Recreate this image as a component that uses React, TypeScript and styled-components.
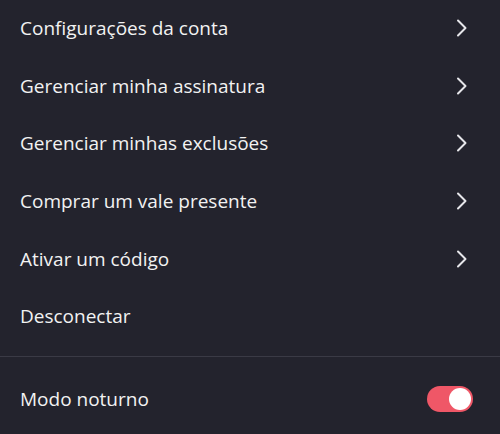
import React, { useState } from "react";
import styled, { createGlobalStyle } from "styled-components";

const Global = createGlobalStyle`
  html, body { margin: 0; padding: 0; background: #23232d; }
  body { font-family: "Open Sans", "Noto Sans", sans-serif; }
`;

const Panel = styled.div`
  width: 500px;
  height: 434px;
  background: #23232d;
  display: flex;
  flex-direction: column;
  overflow: hidden;
`;

const Menu = styled.ul`
  list-style: none;
  margin: -1px 0 0 0;
  padding: 0;
  display: flex;
  flex-direction: column;
  flex-shrink: 0;
`;

const Item = styled.li`
  height: 57.7px;
  flex-shrink: 0;
  display: flex;
  align-items: center;
  justify-content: space-between;
  padding: 0 32px 0 20px;
  color: #f2f2f2;
  font-size: 19px;
  cursor: pointer;
`;

const Label = styled.span`
  line-height: 24px;
`;

const Divider = styled.hr`
  border: none;
  height: 1px;
  flex-shrink: 0;
  background: #3a3a45;
  margin: 11px 0 0 0;
`;

const Footer = styled.div`
  height: 84px;
  flex-shrink: 0;
  display: flex;
  align-items: center;
  justify-content: space-between;
  padding: 0 27px 0 20px;
  color: #f2f2f2;
  font-size: 19px;
`;

const Track = styled.button<{ $on: boolean }>`
  width: 46px;
  height: 26px;
  border-radius: 13px;
  border: none;
  padding: 2px;
  background: ${(p) => (p.$on ? "#ef5767" : "#5a5a66")};
  display: flex;
  justify-content: ${(p) => (p.$on ? "flex-end" : "flex-start")};
  align-items: center;
  cursor: pointer;
`;

const Knob = styled.span`
  width: 22px;
  height: 22px;
  border-radius: 50%;
  background: #ffffff;
`;

const Chevron = () => (
  <svg width="12" height="18" viewBox="0 0 12 18" fill="none">
    <path d="M2 1.5 L9.5 9 L2 16.5" stroke="#e6e6ea" strokeWidth="2" strokeLinecap="round" strokeLinejoin="round" />
  </svg>
);

const items = [
  { label: "Configurações da conta", arrow: true },
  { label: "Gerenciar minha assinatura", arrow: true },
  { label: "Gerenciar minhas exclusões", arrow: true },
  { label: "Comprar um vale presente", arrow: true },
  { label: "Ativar um código", arrow: true },
  { label: "Desconectar", arrow: false },
];

export default function App() {
  const [on, setOn] = useState(true);
  return (
    <Panel>
      <Global />
      <Menu>
        {items.map((it) => (
          <Item key={it.label}>
            <Label>{it.label}</Label>
            {it.arrow && <Chevron />}
          </Item>
        ))}
      </Menu>
      <Divider />
      <Footer>
        <Label>Modo noturno</Label>
        <Track $on={on} onClick={() => setOn(!on)} aria-label="Modo noturno">
          <Knob />
        </Track>
      </Footer>
    </Panel>
  );
}
